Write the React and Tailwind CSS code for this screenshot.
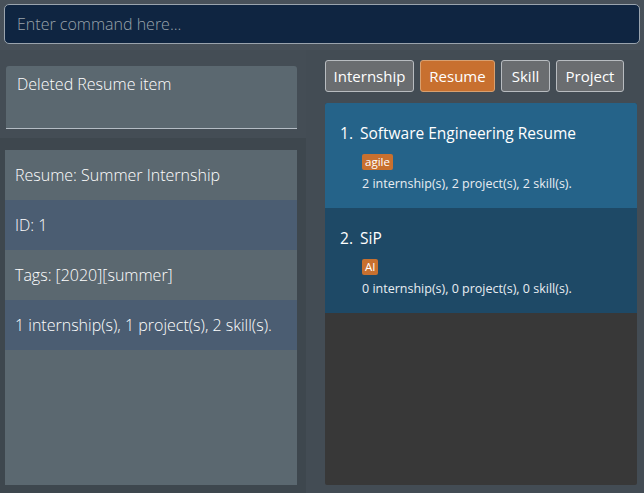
import React from "react";

const font = { fontFamily: '"Open Sans", "Noto Sans", sans-serif' };

function Tab({ label, active, w }) {
  return (
    <div
      className={
        "h-[32px] flex items-center justify-center rounded-[3px] border text-[15px] text-white " +
        w +
        " " +
        (active ? "bg-[#c8702f] border-[#d8a070]" : "bg-[#6a6d70] border-[#b8bcc0]")
      }
    >
      {label}
    </div>
  );
}

function Card({ idx, title, tag, summary, bg }) {
  return (
    <div className={"h-[105px] pl-[15px] pt-[19px] " + bg}>
      <div className="text-[15.5px] leading-[22px] text-white flex">
        <span className="w-[20px]">{idx}.</span>
        <span>{title}</span>
      </div>
      <div className="pl-[22px] mt-[4px]">
        <span className="inline-block bg-[#c8702f] text-white text-[11.5px] leading-[16px] px-[3px] rounded-[2px]">
          {tag}
        </span>
      </div>
      <div className="pl-[22px] mt-[3px] text-[12.5px] leading-[18px] text-[#e8edf2]">{summary}</div>
    </div>
  );
}

export default function App() {
  return (
    <div
      className="w-[644px] h-[493px] bg-gradient-to-b from-[#48515a] to-[#3c454c] flex flex-col overflow-hidden"
      style={font}
    >
      <div className="px-[4px] pt-[4px] pb-[6px]">
        <div className="h-[40px] rounded-[5px] border border-[#9aa4ae] bg-[#0f2541] flex items-center px-[12px] text-[16px] text-[#9aa3ab] font-light">
          Enter command here...
        </div>
      </div>
      <div className="flex flex-1">
        <div className="w-[306px] flex flex-col">
          <div className="h-[88px] pl-[6px] pr-[9px] pt-[16px] bg-[#444d55]">
            <div className="h-[63px] bg-[#5b6870] rounded-t-[3px] border-b border-[#b4bcc4] px-[11px] pt-[6px] text-[16px] font-light text-white">
              Deleted Resume item
            </div>
          </div>
          <div className="flex-1 bg-[#3e474e] pl-[5px] pr-[9px] pt-[12px] pb-[8px]">
            <div className="h-full bg-[#5b6870] text-[16px] font-light text-white">
              <div className="h-[50px] flex items-center px-[10px]">Resume: Summer Internship</div>
              <div className="h-[50px] flex items-center px-[10px] bg-[#4b5d72]">ID: 1</div>
              <div className="h-[50px] flex items-center px-[10px]">Tags: [2020][summer]</div>
              <div className="h-[50px] flex items-center px-[10px] bg-[#4b5d72]">
                1 internship(s), 1 project(s), 2 skill(s).
              </div>
            </div>
          </div>
        </div>
        <div className="flex-1 flex flex-col pl-[19px] pr-[7px] pb-[8px] bg-[#434c54]">
          <div className="flex gap-[6px] pt-[10px]">
            <Tab label="Internship" w="w-[89px]" />
            <Tab label="Resume" w="w-[75px]" active />
            <Tab label="Skill" w="w-[49px]" />
            <Tab label="Project" w="w-[68px]" />
          </div>
          <div className="mt-[11px] flex-1 bg-[#383838] rounded-[2px] overflow-hidden">
            <Card idx="1" title="Software Engineering Resume" tag="agile" summary="2 internship(s), 2 project(s), 2 skill(s)." bg="bg-[#256389]" />
            <Card idx="2" title="SiP" tag="AI" summary="0 internship(s), 0 project(s), 0 skill(s)." bg="bg-[#1e4966]" />
          </div>
        </div>
      </div>
    </div>
  );
}
